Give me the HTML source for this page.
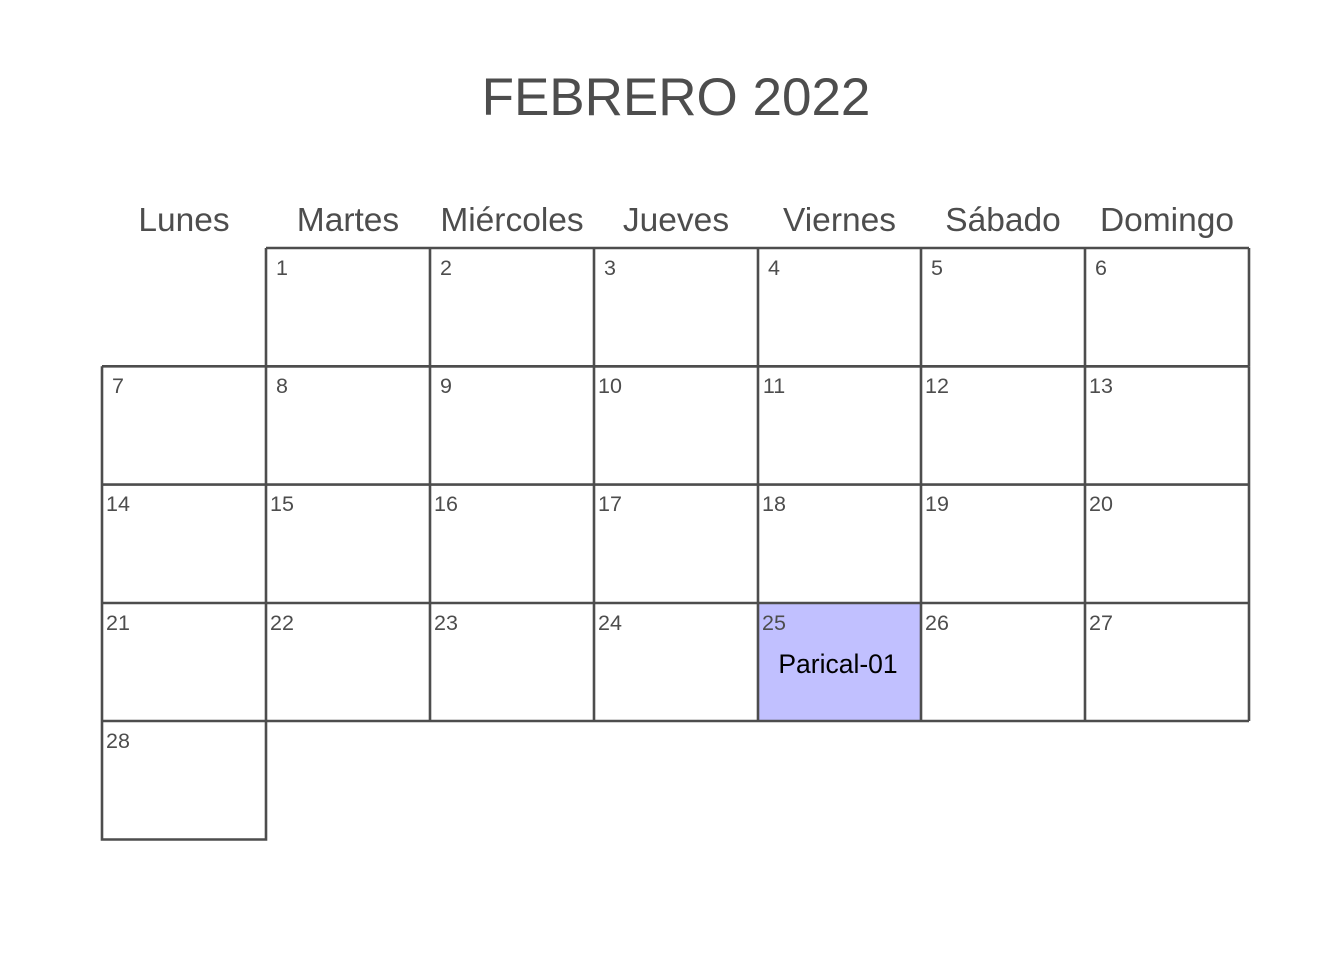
<!DOCTYPE html>
<html><head><meta charset="utf-8"><style>
html,body{margin:0;padding:0;background:#fff;}
svg{display:block;}
text{font-family:"Liberation Sans",Arial,sans-serif;}
</style></head><body>
<svg width="1344" height="960" viewBox="0 0 1344 960" xmlns="http://www.w3.org/2000/svg">
<rect width="1344" height="960" fill="#fff"/>
<text x="676" y="115" font-size="53" fill="#4d4d4d" text-anchor="middle">FEBRERO 2022</text>
<g font-size="33.5" fill="#4d4d4d" text-anchor="middle">
<text x="184" y="231">Lunes</text>
<text x="348" y="231">Martes</text>
<text x="512" y="231">Miércoles</text>
<text x="676" y="231">Jueves</text>
<text x="839.5" y="231">Viernes</text>
<text x="1003" y="231">Sábado</text>
<text x="1167" y="231">Domingo</text>
</g>
<rect x="758" y="603" width="163" height="118" fill="#c1c0ff"/>
<g stroke="#4d4d4d" stroke-width="2.6" fill="none">
<path d="M266 248H1249M266 366.3H1249M266 248V366.3M430 248V366.3M594 248V366.3M758 248V366.3M921 248V366.3M1085 248V366.3M1249 248V366.3"/>
<path d="M102 366.3H1249M102 484.6H1249M102 603H1249M102 721H1249"/>
<path d="M102 366.3V721M266 366.3V721M430 366.3V721M594 366.3V721M758 366.3V721M921 366.3V721M1085 366.3V721M1249 366.3V721"/>
<path d="M102 721V839.5H266V721"/>
</g>
<g font-size="21.5" fill="#4d4d4d" text-anchor="middle">
<text x="282" y="275">1</text><text x="446" y="275">2</text><text x="610" y="275">3</text><text x="774" y="275">4</text><text x="937" y="275">5</text><text x="1101" y="275">6</text>
<text x="118" y="393">7</text><text x="282" y="393">8</text><text x="446" y="393">9</text><text x="610" y="393">10</text><text x="774" y="393">11</text><text x="937" y="393">12</text><text x="1101" y="393">13</text>
<text x="118" y="511">14</text><text x="282" y="511">15</text><text x="446" y="511">16</text><text x="610" y="511">17</text><text x="774" y="511">18</text><text x="937" y="511">19</text><text x="1101" y="511">20</text>
<text x="118" y="630">21</text><text x="282" y="630">22</text><text x="446" y="630">23</text><text x="610" y="630">24</text><text x="774" y="630">25</text><text x="937" y="630">26</text><text x="1101" y="630">27</text>
<text x="118" y="748">28</text>
</g>
<text x="838" y="673" font-size="26.5" fill="#000" text-anchor="middle">Parical-01</text>
</svg>
</body></html>
